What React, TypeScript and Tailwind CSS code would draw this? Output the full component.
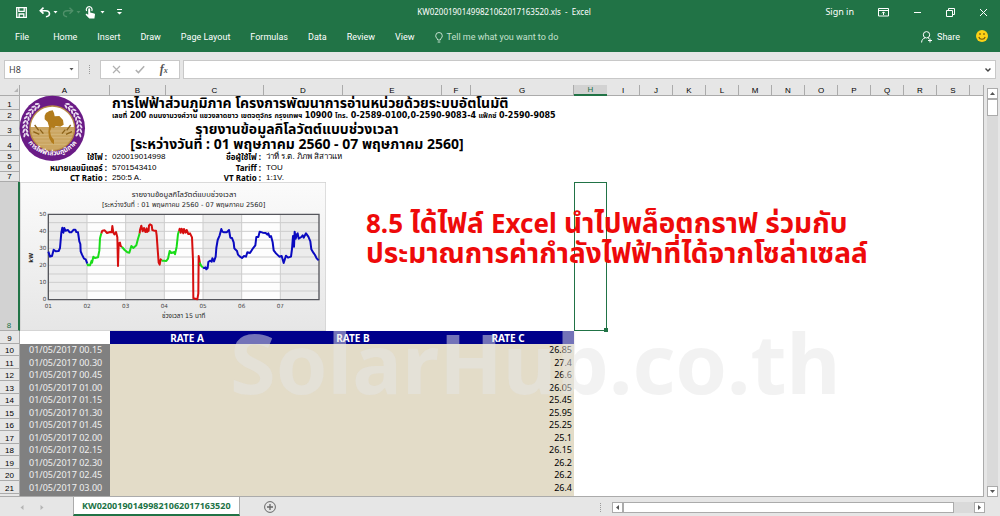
import type { ReactNode } from "react";

const menuItems = ["Home", "Insert", "Draw", "Page Layout", "Formulas", "Data", "Review", "View"];

const columns = [
  { name: "A", width: "w-[90px]" },
  { name: "B", width: "w-[56px]" },
  { name: "C", width: "w-[98px]" },
  { name: "D", width: "w-[79px]" },
  { name: "E", width: "w-[99px]" },
  { name: "F", width: "w-[29px]" },
  { name: "G", width: "w-[103px]" },
  { name: "H", width: "w-[33px]" },
  { name: "I", width: "w-[33px]" },
  { name: "J", width: "w-[33px]" },
  { name: "K", width: "w-[33px]" },
  { name: "L", width: "w-[33px]" },
  { name: "M", width: "w-[33px]" },
  { name: "N", width: "w-[33px]" },
  { name: "O", width: "w-[33px]" },
  { name: "P", width: "w-[33px]" },
  { name: "Q", width: "w-[33px]" },
  { name: "R", width: "w-[33px]" },
  { name: "S", width: "w-[33px]" },
];

const readings = [
  { time: "01/05/2017 00.15", value: "26.85" },
  { time: "01/05/2017 00.30", value: "27.4" },
  { time: "01/05/2017 00.45", value: "26.6" },
  { time: "01/05/2017 01.00", value: "26.05" },
  { time: "01/05/2017 01.15", value: "25.45" },
  { time: "01/05/2017 01.30", value: "25.95" },
  { time: "01/05/2017 01.45", value: "25.25" },
  { time: "01/05/2017 02.00", value: "25.1" },
  { time: "01/05/2017 02.15", value: "26.15" },
  { time: "01/05/2017 02.30", value: "26.2" },
  { time: "01/05/2017 02.45", value: "26.2" },
  { time: "01/05/2017 03.00", value: "26.4" },
];

function TitleBar() {
  return (
    <div className="flex h-6 items-center pr-2 pl-4 text-[8px]">
      <div className="flex flex-1 items-center">
        <button aria-label="Save" className="mr-3">
          <svg width="11" height="11" viewBox="0 0 11 11" fill="none" stroke="#fff" strokeWidth="1.3">
            <path d="M.7.7h9.6v9.6H.7zM2.8.7v3.6h5.4V.7M3.2 10.3V7h4.6v3.3" />
          </svg>
        </button>
        <button aria-label="Undo" className="mr-0.5">
          <svg width="12" height="11" viewBox="0 0 12 11" fill="none" stroke="#fff" strokeWidth="1.6">
            <path d="M4.5.7 1.3 3.7l3.2 3M1.5 3.7h5.2c5 0 5 6 .2 6" />
          </svg>
        </button>
        <Caret className="mr-1 text-white" />
        <button aria-label="Redo" className="mr-0.5">
          <svg width="12" height="11" viewBox="0 0 12 11" fill="none" stroke="#4f9069" strokeWidth="1.4">
            <path d="m7.5.7 3.2 3-3.2 3M10.5 3.7H5.3c-5 0-5 6-.2 6" />
          </svg>
        </button>
        <Caret className="mr-1 text-[#4f9069]" />
        <button aria-label="Touch mode" className="mr-1">
          <svg width="11" height="13" viewBox="0 0 11 13" fill="#fff">
            <path d="M3.2 3.5c0-1.700 2-1.700 2 0v3l4 .9c.7.2.9.6.8 1.200l-.6 3.900H4.300L.9 8.900c-.6-1 .4-1.600 1.200-1l1.100.8z" />
            <path d="M1.600 4.900a2.900 2.900 0 1 1 5.200 0" fill="none" stroke="#fff" strokeWidth="1.200" />
          </svg>
        </button>
        <Caret className="mr-3 text-white" />
        <button aria-label="Customize toolbar">
          <svg width="5" height="6" viewBox="0 0 5 6" fill="#fff">
            <path d="M0 0h5v1H0zM0 3h5L2.500 5.500z" />
          </svg>
        </button>
      </div>
      <h1 className="font-normal">KW02001901499821062017163520.xls&nbsp; -&nbsp; Excel</h1>
      <div className="flex flex-1 items-center justify-end">
        <button className="mr-6 text-[9px]">Sign in</button>
        <button aria-label="Ribbon display options" className="mr-6">
          <svg width="11" height="9" viewBox="0 0 11 9" fill="none" stroke="#fff">
            <path d="M.5.5h10v7.500H.5zM.5 2.500h10M5.500 7V4M4 5.300l1.500-1.500L7 5.300" />
          </svg>
        </button>
        <button aria-label="Minimize" className="mr-6">
          <svg width="9" height="9" viewBox="0 0 9 9" stroke="#fff"><path d="M1 4.500h7" /></svg>
        </button>
        <button aria-label="Restore" className="mr-6">
          <svg width="9" height="9" viewBox="0 0 9 9" fill="none" stroke="#fff">
            <path d="M.5 2.500h6v6h-6zM2.500 2.500v-2h6v6h-2" />
          </svg>
        </button>
        <button aria-label="Close" className="mr-1">
          <svg width="9" height="9" viewBox="0 0 9 9" stroke="#fff"><path d="m1 1 7 7M8 1 1 8" /></svg>
        </button>
      </div>
    </div>
  );
}

function Caret({ className }: { className: string }) {
  return (
    <svg className={className} width="5" height="3" viewBox="0 0 5 3" fill="currentColor">
      <path d="M.5 0h4l-2 2.500z" />
    </svg>
  );
}

function MenuBar() {
  return (
    <div className="flex h-7 items-start pr-3 pl-[15px] font-[Roboto,sans-serif] text-[9px] leading-[26px]">
      <button className="mr-6">File</button>
      <nav className="flex gap-5">
        {menuItems.map((item) => (
          <button key={item}>{item}</button>
        ))}
      </nav>
      <button className="ml-5 flex items-center gap-1 text-[#c5e0cf]">
        <svg width="8" height="11" viewBox="0 0 8 11" fill="none" stroke="currentColor">
          <path d="M2.700 8c0-1.500-2-2.200-2-4.200a3.300 3.300 0 0 1 6.600 0c0 2-2 2.700-2 4.200zM2.700 10h2.600" />
        </svg>
        Tell me what you want to do
      </button>
      <button className="ml-auto flex items-center gap-1">
        <svg width="12" height="12" viewBox="0 0 12 12" fill="none" stroke="#fff">
          <circle cx="5.500" cy="3.800" r="3.200" />
          <path d="M.6 11.500C.6 9 2 7.500 4 6.900M7 6.900l1.300.9M9 7.500v4M7 9.500h4" />
        </svg>
        Share
      </button>
      <button aria-label="Feedback" className="ml-4 flex h-6 items-center">
        <svg width="12" height="12" viewBox="0 0 12 12">
          <circle cx="6" cy="6" r="6" fill="#fcd116" />
          <path d="M4 3v2M8 3v2M2.800 7c1 3 5.400 3 6.400 0" fill="none" stroke="#6b5410" strokeWidth="1.100" />
        </svg>
      </button>
    </div>
  );
}

function Dots() {
  return (
    <svg width="2" height="9" viewBox="0 0 2 9" fill="#9a9a9a">
      <path d="M0 0h1v1H0zM0 2h1v1H0zM0 4h1v1H0zM0 6h1v1H0zM0 8h1v1H0z" />
    </svg>
  );
}

function FormulaBar() {
  return (
    <div className="flex h-[33px] items-start bg-[#e6e6e6] pt-2 pr-1 pl-1">
      <div className="flex h-[19px] w-[75px] items-center border border-[#c8c8c8] bg-white pr-1">
        <input aria-label="Name box" defaultValue="H8" className="h-4 w-full min-w-0 pl-1 text-[9px] text-[#444] outline-none" />
        <Caret className="shrink-0 text-[#555]" />
      </div>
      <div className="flex h-[19px] w-[21px] items-center justify-center"><Dots /></div>
      <div className="flex h-[19px] w-20 items-center justify-around border border-[#c8c8c8] bg-white px-1">
        <button aria-label="Cancel">
          <svg width="9" height="9" viewBox="0 0 9 9" stroke="#b0b0b0" strokeWidth="1.200"><path d="m1 1 7 7M8 1 1 8" /></svg>
        </button>
        <button aria-label="Enter">
          <svg width="10" height="9" viewBox="0 0 10 9" fill="none" stroke="#b0b0b0" strokeWidth="1.500"><path d="m.8 5 2.600 2.600L9.200 1.200" /></svg>
        </button>
        <button aria-label="Insert function" className="font-['Liberation_Serif',serif] text-[12px] leading-4 font-bold text-[#555] italic">
          f<span className="text-[8px]">x</span>
        </button>
      </div>
      <div className="ml-[3px] flex h-[19px] flex-1 items-center border border-[#c8c8c8] bg-white pr-1">
        <input aria-label="Formula" className="h-4 w-full min-w-0 px-1 text-[9px] outline-none" />
        <svg width="6" height="4" viewBox="0 0 6 4" fill="none" stroke="#444" strokeWidth="1.400"><path d="m.5.500 2.500 2.500L5.500.500" /></svg>
      </div>
    </div>
  );
}

function Logo() {
  const leaves = [0, 1, 2, 3, 4, 5, 6, 7, 8];
  return (
    <svg width="72" height="72" viewBox="0 0 216 216">
      <defs>
        <path id="logo-arc" d="M19 128A90 90 0 0 0 188 128" />
        <clipPath id="logo-disc"><circle cx="103" cy="106" r="65" /></clipPath>
      </defs>
      <circle cx="103" cy="106" r="98" fill="#6a1b86" />
      <circle cx="103" cy="106" r="69" fill="#b78a45" />
      <g clipPath="url(#logo-disc)">
        <path d="M30 30h150v72H30z" fill="#fff" />
        <path d="M30 102h150v80H30z" fill="#cba662" />
        <path d="M30 114h150M30 124h150M30 134h150M30 144h150M30 154h150" stroke="#d9bd85" strokeWidth="2" />
        <path d="m50 96 12 16M46 116l18 8M158 96l-12 16M162 116l-18 8M66 110l10 12M142 110l-10 12" stroke="#8c6218" strokeWidth="4" />
        <path d="m80 68 4-8 10-6 10-2 4 8 2 10 14-1 11 12 2 14-10 6-14-1-6 6-6-3-5 12 3 14 9 12 0 13-8-6-7-14-2-18 2-15-4-14-9-8z" fill="#b27c1c" />
      </g>
      {leaves.map((i) => (
        <g key={i} fill="#e9dcf0">
          <ellipse cx="17" cy="106" rx="3" ry="7" transform={`rotate(${i * 9 - 14} 103 106) rotate(28 17 106)`} />
          <ellipse cx="26" cy="106" rx="3" ry="7" transform={`rotate(${i * 9 - 14} 103 106) rotate(-28 26 106)`} />
          <ellipse cx="189" cy="106" rx="3" ry="7" transform={`rotate(${14 - i * 9} 103 106) rotate(-28 189 106)`} />
          <ellipse cx="180" cy="106" rx="3" ry="7" transform={`rotate(${14 - i * 9} 103 106) rotate(28 180 106)`} />
        </g>
      ))}
      <text fontSize="20" fontWeight="700" fill="#fff" textAnchor="middle">
        <textPath href="#logo-arc" startOffset="50%">การไฟฟ้าส่วนภูมิภาค</textPath>
      </text>
    </svg>
  );
}

const traces = [
  { color: "#0a0ac0", points: "145,215 150,230 156,228 161,209 167,214 176,213 180,204 184,158 187,143 190,158 193,144 196,152 204,150 209,157 214,157 221,149 226,149 229,156 234,157 238,184 241,192 242,214 246,224 252,236 257,238 262,251" },
  { color: "#19dc19", points: "262,251 264,256 270,256 275,242 276,248 280,230 285,234 294,232 298,212 300,175 304,160" },
  { color: "#d60f0f", points: "304,160 307,152 314,151 321,159 330,156 335,157 337,138 340,158 343,163 348,156 352,172 354,258 356,190 360,188 362,198 366,201" },
  { color: "#19dc19", points: "366,201 374,210 382,217 388,218 394,198 400,204 409,196 413,180 419,160" },
  { color: "#d60f0f", points: "419,160 420,150 424,137 428,154 432,144 436,156 440,145 441,156 446,152 447,136 450,133 455,136 457,150 462,152 468,152 470,166 473,208 476,248 479,254 482,238 485,242" },
  { color: "#19dc19", points: "485,242 492,242 499,243 504,236 509,213 514,219 523,216 525,223 530,200 534,162 537,153" },
  { color: "#d60f0f", points: "537,153 539,146 542,158 545,146 550,160 552,147 557,158 560,150 565,162 570,160 576,172 579,240 580,355 592,358 595,340 596,228 599,245 600,258" },
  { color: "#19dc19", points: "599,248 604,258 609,263" },
  { color: "#0a0ac0", points: "609,263 613,264 617,262 619,268 623,264 625,246 630,242 635,245 637,235 642,244 647,230 649,204 653,180 659,166 664,147 667,155 672,157 680,157 687,150 691,173 696,174 701,187 703,205 711,213 714,224 719,229 726,234 732,228 738,230 742,217 750,219 759,205 766,196 769,171 775,171 779,155 788,158 797,159 802,164 805,160 809,171 813,168 818,187 821,211 828,220 838,230 845,228 851,249 858,227 864,233 873,230 876,207 879,168 882,200 884,155 887,176 890,164 893,160 896,176 904,171 908,166 911,173 918,160 925,170 931,184 934,208 940,218 945,225 950,235 956,241" },
];

function Chart() {
  return (
    <svg width="306" height="149" viewBox="60 6 918 447" role="img" className="block font-['DejaVu_Sans','Noto_Sans_Thai',sans-serif]">
      <defs>
        <linearGradient id="chart-bg" x1="0" y1="0" x2="0" y2="1">
          <stop offset="0" stopColor="#fbfbfb" />
          <stop offset="1" stopColor="#e6e6e6" />
        </linearGradient>
      </defs>
      <path d="M60 6h918v447H60z" fill="url(#chart-bg)" stroke="#cfcfcf" strokeWidth="4" />
      <g textAnchor="middle" fill="#222">
        <text x="552" y="52" fontSize="23">รายงานข้อมูลกิโลวัตต์แบบช่วงเวลา</text>
        <text x="551" y="80" fontSize="20">[ระหว่างวันที่ : 01 พฤษภาคม 2560 - 07 พฤษภาคม 2560]</text>
        <text x="551" y="413" fontSize="19">ช่วงเวลา 15 นาที</text>
        <text x="98" y="233" fontSize="17" fontWeight="700" transform="rotate(-90 98 233)">kW</text>
      </g>
      <path d="M145 103h812v256H145z" fill="#ececec" />
      <path d="M261 103h116v256H261zM493 103h116v256H493zM725 103h116v256H725z" fill="#fdfdfd" />
      <path d="M145 128h812M145 154h812M145 180h812M145 205h812M145 231h812M145 256h812M145 282h812M145 307h812M145 333h812M261 103v256M377 103v256M493 103v256M609 103v256M725 103v256M841 103v256" stroke="#cdcdcd" strokeWidth="3" />
      <path d="M145 103h812v256H145z" fill="none" stroke="#55565c" strokeWidth="4" />
      {traces.map((trace, i) => (
        <polyline key={i} points={trace.points} fill="none" stroke={trace.color} strokeWidth="6" strokeLinejoin="round" />
      ))}
      <g fontSize="17" fill="#444" textAnchor="end">
        {[50, 40, 30, 20, 10, 0].map((tick, i) => (
          <text key={tick} x="139" y={109 + i * 51}>{tick}</text>
        ))}
      </g>
      <g fontSize="17" fill="#444" textAnchor="middle">
        {["01", "02", "03", "04", "05", "06", "07"].map((tick, i) => (
          <text key={tick} x={145 + i * 116} y="383">{tick}</text>
        ))}
      </g>
    </svg>
  );
}

function RowHead({ n, height, active = false }: { n: number; height: string; active?: boolean }) {
  return (
    <th
      scope="row"
      className={
        active
          ? `${height} border-r-2 border-b border-r-[#217346] border-b-[#ababab] bg-[#d2d2d2] p-0 align-bottom font-['Liberation_Sans',sans-serif] text-[8px] leading-[9px] font-normal text-[#217346]`
          : `${height} border-r border-b border-[#ababab] bg-[#e6e6e6] p-0 align-bottom font-['Liberation_Sans',sans-serif] text-[8px] leading-[9px] font-normal text-black`
      }
    >
      {n}
    </th>
  );
}

function InfoRow({ n, height, cells }: { n: number; height: string; cells: [string, string, string, string] }) {
  return (
    <tr className="text-[8px] leading-[9px] whitespace-nowrap">
      <RowHead n={n} height={height} />
      <td className="p-0 pr-[3px] text-right font-bold">{cells[0]}</td>
      <td className="p-0 pl-0.5 font-['Liberation_Sans',sans-serif]">{cells[1]}</td>
      <td className="p-0 pr-[3px] text-right font-bold">{cells[2]}</td>
      <td colSpan={4} className="p-0 pl-0.5 font-['Liberation_Sans',sans-serif]">{cells[3]}</td>
      <td colSpan={13} className="p-0" />
    </tr>
  );
}

function Sheet() {
  return (
    <table className="w-full table-fixed border-separate border-spacing-0 text-black">
      <colgroup>
        <col className="w-5" />
        {columns.map((c) => (
          <col key={c.name} className={c.width} />
        ))}
        <col />
      </colgroup>
      <thead>
        <tr className="font-['Liberation_Sans',sans-serif] text-[8px] leading-[9px] text-black">
          <th aria-label="Select all" className="h-[11px] border-r border-b border-[#ababab] bg-[#e6e6e6] p-0">
            <svg className="ml-auto" width="6" height="6" viewBox="0 0 6 6" fill="#b5b5b5"><path d="M5 1v4H1z" /></svg>
          </th>
          {columns.map((c) => (
            <th
              key={c.name}
              scope="col"
              className={
                c.name === "H"
                  ? "h-[11px] border-b-2 border-[#217346] bg-[#d2d2d2] p-0 font-normal text-[#217346]"
                  : "h-[11px] border-r border-b border-[#ababab] bg-[#e6e6e6] p-0 font-normal"
              }
            >
              {c.name}
            </th>
          ))}
          <th className="border-b border-[#ababab] bg-[#e6e6e6] p-0" />
        </tr>
      </thead>
      <tbody>
        <tr className="whitespace-nowrap">
          <RowHead n={1} height="h-[14px]" />
          <td />
          <td colSpan={6} className="p-0 pl-0.5 text-[14px] leading-[14px] font-bold">
            การไฟฟ้าส่วนภูมิภาค โครงการพัฒนาการอ่านหน่วยด้วยระบบอัตโนมัติ
          </td>
          <td colSpan={13} />
        </tr>
        <tr className="whitespace-nowrap">
          <RowHead n={2} height="h-[11px]" />
          <td />
          <td colSpan={6} className="p-0 pl-0.5 font-['DejaVu_Sans','Noto_Sans_Thai',sans-serif] text-[7px] leading-[9px] font-bold">
            เลขที่ <span className="text-[8px]">200</span> ถนนงามวงศ์วาน แขวงลาดยาว เขตจตุจักร กรุงเทพฯ <span className="text-[8px]">10900</span> โทร.{" "}
            <span className="text-[8px]">0-2589-0100,0-2590-9083-4</span> แฟ็กซ์ <span className="text-[8px]">0-2590-9085</span>
          </td>
          <td colSpan={13} />
        </tr>
        <tr>
          <RowHead n={3} height="h-[15px]" />
          <td colSpan={7} className="p-0 text-center text-[14px] leading-[15px] font-bold">รายงานข้อมูลกิโลวัตต์แบบช่วงเวลา</td>
          <td colSpan={13} />
        </tr>
        <tr>
          <RowHead n={4} height="h-[15px]" />
          <td colSpan={7} className="p-0 text-center text-[14px] leading-[15px] font-bold">
            [ระหว่างวันที่ : 01 พฤษภาคม 2560 - 07 พฤษภาคม 2560]
          </td>
          <td colSpan={13} />
        </tr>
        <InfoRow n={5} height="h-[11px]" cells={["ใช้ไฟ :", "020019014998", "ชื่อผู้ใช้ไฟ :", "ว่าที่ ร.ต. ภิภพ สิสาวแห"]} />
        <InfoRow n={6} height="h-[10px]" cells={["หมายเลขมิเตอร์ :", "5701543410", "Tariff :", "TOU"]} />
        <InfoRow n={7} height="h-[10px]" cells={["CT Ratio :", "250:5 A.", "VT Ratio :", "1:1V."]} />
        <tr>
          <RowHead n={8} height="h-[149px]" active />
          <td colSpan={7} className="p-0"><Chart /></td>
          <td className="relative border border-[#217346] p-0">
            <span className="absolute -right-0.5 -bottom-0.5 size-1 bg-[#217346]" />
          </td>
          <td colSpan={12} />
        </tr>
        <tr className="text-[10px] leading-3 font-bold text-white">
          <RowHead n={9} height="h-[13px]" />
          <td />
          <td colSpan={2} className="bg-[#00008b] p-0 text-center">RATE A</td>
          <td colSpan={2} className="bg-[#00008b] p-0 text-center">RATE B</td>
          <td colSpan={2} className="bg-[#00008b] p-0 text-center">RATE C</td>
          <td colSpan={13} />
        </tr>
        {readings.map((r, i) => (
          <tr key={r.time} className="text-[9px] leading-3">
            <RowHead n={i + 10} height={i % 2 ? "h-[13px]" : "h-[12px]"} />
            <td className="bg-[#808080] p-0 pl-[9px] whitespace-nowrap text-[#f0f0f0]">{r.time}</td>
            <td colSpan={5} className="bg-[#e3dcc8] p-0" />
            <td className="bg-[#e3dcc8] p-0 pr-0.5 text-right text-black">{r.value}</td>
            <td colSpan={13} className="p-0" />
          </tr>
        ))}
        <tr>
          <td className="h-0.5 border-r border-[#ababab] bg-[#e6e6e6] p-0" />
          <td className="bg-[#808080] p-0" />
          <td colSpan={6} className="bg-[#e3dcc8] p-0" />
          <td colSpan={13} className="p-0" />
        </tr>
      </tbody>
    </table>
  );
}

function ScrollButton({ label, path }: { label: string; path: string }) {
  return (
    <button aria-label={label} className="flex size-[11px] shrink-0 items-center justify-center border border-[#ababab] bg-white">
      <svg width="5" height="5" viewBox="0 0 5 5" fill="#555"><path d={path} /></svg>
    </button>
  );
}

function Overlay({ className, children }: { className: string; children: ReactNode }) {
  return <div className={`pointer-events-none absolute whitespace-nowrap ${className}`}>{children}</div>;
}

function BottomBar() {
  return (
    <div className="flex h-5 items-start bg-[#e6e6e6]">
      <div className="flex h-5 w-[73px] items-center gap-4 pl-5">
        <button aria-label="Previous sheet"><svg width="4" height="5" viewBox="0 0 4 5" fill="#b5b5b5"><path d="M3.500 0v5L.5 2.500z" /></svg></button>
        <button aria-label="Next sheet"><svg width="4" height="5" viewBox="0 0 4 5" fill="#b5b5b5"><path d="M.5 0v5l3-2.500z" /></svg></button>
      </div>
      <button className="h-[19px] border-x border-b-2 border-x-[#ababab] border-b-[#217346] bg-white px-2 text-[9px] leading-4 font-bold text-[#217346]">
        KW02001901499821062017163520
      </button>
      <button aria-label="New sheet" className="ml-6 flex h-5 items-center">
        <svg width="12" height="12" viewBox="0 0 12 12" fill="none" stroke="#666"><circle cx="6" cy="6" r="5.400" /><path d="M6 3v6M3 6h6" strokeWidth="1.300" /></svg>
      </button>
      <div className="ml-auto flex h-5 w-[400px] items-center">
        <Dots />
        <div className="ml-[10px] flex flex-1 bg-[#dadada]">
          <ScrollButton label="Scroll left" path="M4 0v5L1 2.500z" />
          <div className="mr-5 h-[11px] flex-1 border border-[#ababab] bg-white" />
          <ScrollButton label="Scroll right" path="M1 0v5l3-2.500z" />
        </div>
        <div className="w-[15px]" />
      </div>
    </div>
  );
}

export default function App() {
  return (
    <div className="flex min-h-screen flex-col bg-[#e6e6e6] font-['Noto_Sans','Noto_Sans_Thai',sans-serif]">
      <header className="bg-[#217346] text-white">
        <TitleBar />
        <MenuBar />
      </header>
      <FormulaBar />
      <main className="flex flex-1">
        <div className="relative min-w-0 flex-1 overflow-hidden border-r border-b border-[#ababab] bg-white">
          <Sheet />
          <Overlay className="top-2 left-[18px]"><Logo /></Overlay>
          <Overlay className="top-[123px] left-[366px] text-[28px] leading-[29px] font-bold text-[#ee0a0a]">
            <p>
              <span className="text-[26px]">8.5</span> ได้ไฟล์ <span className="text-[26px]">Excel</span> นำไปพล็อตกราฟ ร่วมกับ
            </p>
            <p>ประมาณการค่ากำลังไฟฟ้าที่ได้จากโซล่าเซลล์</p>
          </Overlay>
          <Overlay className="top-[227px] left-[230px] text-[83px] leading-[100px] font-bold text-[#e6e6e6]/50">SolarHub.co.th</Overlay>
        </div>
        <div className="flex w-4 flex-col items-center bg-[#e6e6e6] pt-[3px]">
          <ScrollButton label="Scroll up" path="M0 4h5L2.500 1z" />
          <div className="flex w-[11px] flex-1 flex-col bg-[#dadada]">
            <div className="h-[17px] border border-[#ababab] bg-white" />
          </div>
          <ScrollButton label="Scroll down" path="M0 1h5L2.500 4z" />
        </div>
      </main>
      <BottomBar />
    </div>
  );
}
